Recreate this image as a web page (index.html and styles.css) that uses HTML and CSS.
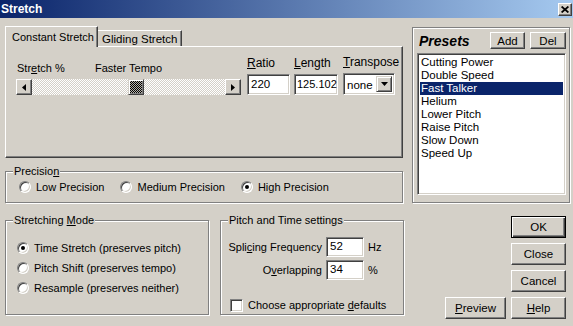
FILE: index.html
```html
<!DOCTYPE html>
<html lang="en">
  <head>
    <meta charset="UTF-8" />
    <title>Stretch</title>
    <link rel="stylesheet" href="styles.css">
  </head>
  <body>
  <div class="window">
    <div class="titlebar">
      <span class="title">Stretch</span>
      <span class="caption-btn">
        <svg width="8" height="7" viewBox="0 0 8 7"><path d="M0.6 0.5L7.4 6.5M7.4 0.5L0.6 6.5" stroke="#000" stroke-width="1.7"/></svg>
      </span>
    </div>

    <div class="client">
      <!-- left top: tabs + precision -->
      <div class="left-top">
        <div class="tabs">
          <div class="tab active">Constant Stretch</div>
          <div class="tab">Gliding Stretch</div>
        </div>
        <div class="tab-panel">
          <div class="stretch-row">
            <div class="slider-block">
              <div class="slider-labels">
                <span class="lbl-stretch">Str<u>e</u>tch %</span>
                <span>Faster Tempo</span>
              </div>
              <div class="slider">
                <span class="arrow-btn">
                  <svg width="4" height="7" viewBox="0 0 4 7"><path d="M4 0L0 3.5L4 7Z" fill="#000"/></svg>
                </span>
                <span class="track"><span class="thumb"></span></span>
                <span class="arrow-btn">
                  <svg width="4" height="7" viewBox="0 0 4 7"><path d="M0 0L4 3.5L0 7Z" fill="#000"/></svg>
                </span>
              </div>
            </div>
            <div class="field field-ratio">
              <span class="field-label"><u>R</u>atio</span>
              <div class="input">220</div>
            </div>
            <div class="field field-length">
              <span class="field-label"><u>L</u>ength</span>
              <div class="input">125.102</div>
            </div>
            <div class="field field-transpose">
              <span class="field-label"><u>T</u>ranspose</span>
              <div class="select">
                <span class="select-value">none</span>
                <span class="drop-btn">
                  <svg width="7" height="4" viewBox="0 0 7 4"><path d="M0 0H7L3.5 4Z" fill="#000"/></svg>
                </span>
              </div>
            </div>
          </div>
        </div>

        <div class="group precision">
          <span class="group-title">Precisio<u>n</u></span>
          <label class="opt"><span class="radio"></span><span>Low Precision</span></label>
          <label class="opt"><span class="radio"></span><span>Medium Precision</span></label>
          <label class="opt"><span class="radio checked"></span><span>High Precision</span></label>
        </div>
      </div>

      <!-- right top: presets -->
      <div class="presets">
        <div class="presets-head">
          <span class="presets-title">Presets</span>
          <span class="btn btn-add">Add</span>
          <span class="btn btn-del">Del</span>
        </div>
        <ul class="listbox">
          <li>Cutting Power</li>
          <li>Double Speed</li>
          <li class="selected">Fast Talker</li>
          <li>Helium</li>
          <li>Lower Pitch</li>
          <li>Raise Pitch</li>
          <li>Slow Down</li>
          <li>Speed Up</li>
        </ul>
      </div>

      <!-- left bottom -->
      <div class="left-bottom">
        <div class="group mode">
          <span class="group-title">Stretching <u>M</u>ode</span>
          <label class="opt"><span class="radio checked"></span><span>Time Stretch (preserves pitch)</span></label>
          <label class="opt"><span class="radio"></span><span>Pitch Shift (preserves tempo)</span></label>
          <label class="opt"><span class="radio"></span><span>Resample (preserves neither)</span></label>
        </div>
        <div class="group pitch">
          <span class="group-title">Pitch and Time settings</span>
          <div class="pitch-grid">
            <span class="pl">Spli<u>c</u>ing Frequency</span>
            <div class="input">52</div>
            <span>Hz</span>
            <span class="pl">O<u>v</u>erlapping</span>
            <div class="input">34</div>
            <span>%</span>
          </div>
          <label class="check-row"><span class="checkbox"></span><span>Choose appropriate <u>d</u>efaults</span></label>
        </div>
      </div>

      <!-- right bottom: buttons -->
      <div class="actions">
        <span class="btn btn-default">OK</span>
        <span class="btn">Close</span>
        <span class="btn">Cancel</span>
        <span class="btn btn-preview"><span><u>P</u>review</span></span>
        <span class="btn"><span><u>H</u>elp</span></span>
      </div>
    </div>
  </div>
  </body>
</html>
```

FILE: styles.css
```css
* {
  box-sizing: border-box;
}
body {
  margin: 0;
  font: 11px "Liberation Sans", Arial, sans-serif;
  color: #000;
}
u {
  text-decoration-thickness: 1px;
  text-underline-offset: 1px;
}
.window {
  width: 573px;
  height: 326px;
  background: #d4d0c8;
  overflow: hidden;
}

/* title bar */
.titlebar {
  height: 18px;
  display: flex;
  align-items: center;
  justify-content: space-between;
  background: linear-gradient(to right, #0a246a, #a6caf0);
}
.title {
  color: #fff;
  font-weight: bold;
  font-size: 12px;
  padding-left: 1px;
}
.caption-btn {
  width: 14px;
  height: 13px;
  margin-right: 1px;
  display: flex;
  align-items: center;
  justify-content: center;
  background: #d4d0c8;
  border: 1px solid;
  border-color: #fff #404040 #404040 #fff;
  box-shadow: inset -1px -1px #808080;
}

/* layout */
.client {
  display: grid;
  grid-template-columns: 399px 158px;
  column-gap: 8px;
  padding: 8px 0 0 5px;
}

/* tabs */
.tabs {
  display: flex;
  align-items: flex-end;
  height: 21px;
  margin-bottom: -1px;
}
.tab {
  position: relative;
  height: 16px;
  margin-bottom: 1px;
  padding: 2px 4px 0 4px;
  background: #d4d0c8;
  border-top: 1px solid #fff;
  border-right: 1px solid #404040;
  box-shadow: inset -1px 0 #808080;
  font-size: 11.5px;
  white-space: nowrap;
}
.tab.active {
  z-index: 1;
  width: 93px;
  height: 21px;
  margin-bottom: 0;
  padding: 4px 0 0 6px;
  border-left: 1px solid #fff;
  font-size: 11px;
}
.tab-panel {
  width: 398px;
  height: 112px;
  padding: 9px 0 0 10px;
  border: 1px solid;
  border-color: #fff #404040 #404040 #fff;
  box-shadow: inset -1px -1px #808080;
}
.stretch-row {
  display: flex;
  align-items: flex-end;
}
.slider-block {
  width: 225px;
}
.slider-labels {
  display: flex;
  line-height: 13px;
  margin-bottom: 4px;
}
.lbl-stretch {
  width: 79px;
  padding-left: 1px;
}
.slider {
  display: flex;
  height: 16px;
}
.arrow-btn {
  width: 16px;
  height: 16px;
  display: flex;
  align-items: center;
  justify-content: center;
  background: #d4d0c8;
  border: 1px solid;
  border-color: #fff #404040 #404040 #fff;
  box-shadow: inset -1px -1px #808080;
}
.track {
  flex: 1;
  display: flex;
  padding-left: 96px;
  background-image: conic-gradient(#fff 25%, #d4d0c8 0 50%, #fff 0 75%, #d4d0c8 0);
  background-size: 2px 2px;
}
.thumb {
  width: 16px;
  height: 16px;
  border: 1px solid;
  border-color: #d4d0c8 #404040 #404040 #d4d0c8;
  box-shadow: inset 1px 1px #fff, inset -1px -1px #808080;
  background-image: conic-gradient(#000 25%, #b8b4ac 0 50%, #000 0 75%, #b8b4ac 0);
  background-size: 2px 2px;
}
.field {
  display: flex;
  flex-direction: column;
}
.field-label {
  line-height: 13px;
  margin-bottom: 4px;
  font-size: 12px;
}
.field-ratio {
  margin-left: 6px;
  width: 43px;
}
.field-length {
  margin-left: 4px;
  width: 44px;
}
.field-transpose {
  margin-left: 5px;
  width: 52px;
}
.input {
  height: 21px;
  padding: 3px 0 0 3px;
  background: #fff;
  border: 1px solid;
  border-color: #808080 #fff #fff #808080;
  box-shadow: inset 1px 1px #404040, inset -1px -1px #d4d0c8;
  font-size: 11.5px;
  white-space: nowrap;
  overflow: hidden;
}
.field-length .input {
  padding-left: 2px;
  font-size: 11px;
}
.select {
  height: 22px;
  display: flex;
  padding: 2px;
  background: #fff;
  border: 1px solid;
  border-color: #808080 #fff #fff #808080;
  box-shadow: inset 1px 1px #404040, inset -1px -1px #d4d0c8;
  font-size: 11.5px;
}
.select-value {
  flex: 1;
  padding: 3px 0 0 1px;
}
.drop-btn {
  width: 16px;
  display: flex;
  align-items: center;
  justify-content: center;
  background: #d4d0c8;
  border: 1px solid;
  border-color: #d4d0c8 #404040 #404040 #d4d0c8;
  box-shadow: inset 1px 1px #fff, inset -1px -1px #808080;
}

/* group boxes */
.group {
  position: relative;
  border: 1px solid #808080;
  box-shadow: inset 1px 1px #fff, 1px 1px #fff;
}
.group-title {
  position: absolute;
  top: -7px;
  left: 7px;
  padding: 0 1px;
  line-height: 13px;
  background: #d4d0c8;
}
.precision {
  width: 398px;
  height: 32px;
  margin-top: 13px;
  display: flex;
  align-items: center;
  gap: 16px;
  padding-left: 13px;
}
.opt {
  display: flex;
  align-items: center;
  gap: 5px;
  line-height: 13px;
}
.radio {
  position: relative;
  width: 12px;
  height: 12px;
  border-radius: 50%;
  background: #fff;
  border: 1px solid;
  border-color: #808080 #fff #fff #808080;
  box-shadow: inset 1px 1px #404040, inset -1px -1px #d4d0c8;
}
.radio.checked::after {
  content: "";
  position: absolute;
  left: 3px;
  top: 3px;
  width: 4px;
  height: 4px;
  border-radius: 50%;
  background: #000;
}
.checkbox {
  width: 13px;
  height: 13px;
  background: #fff;
  border: 1px solid;
  border-color: #808080 #fff #fff #808080;
  box-shadow: inset 1px 1px #404040, inset -1px -1px #d4d0c8;
}

.left-bottom {
  display: flex;
  gap: 11px;
  margin-top: 17px;
}
.mode {
  width: 204px;
  height: 95px;
  display: flex;
  flex-direction: column;
  padding: 17px 0 0 11px;
}
.mode .opt {
  height: 20px;
}
.pitch {
  width: 184px;
  height: 95px;
  padding-top: 16px;
}
.pitch-grid {
  display: grid;
  grid-template-columns: 101px 38px auto;
  column-gap: 4px;
  row-gap: 3px;
  align-items: center;
}
.pitch-grid .input {
  height: 20px;
  padding-top: 2px;
}
.pl {
  text-align: right;
}
.check-row {
  display: flex;
  align-items: center;
  gap: 5px;
  margin: 19px 0 0 9px;
  line-height: 13px;
}

/* presets */
.presets {
  width: 158px;
  height: 176px;
  margin-top: 1px;
  padding: 4px 3px 0 5px;
  border: 1px solid #808080;
  box-shadow: inset 1px 1px #fff, 1px 1px #fff;
}
.presets-head {
  display: flex;
  align-items: center;
  height: 17px;
}
.presets-title {
  flex: 1;
  font-size: 14px;
  font-weight: bold;
  font-style: italic;
  padding-left: 1px;
}
.btn {
  display: flex;
  align-items: center;
  justify-content: center;
  background: #d4d0c8;
  border: 1px solid;
  border-color: #fff #404040 #404040 #fff;
  box-shadow: inset -1px -1px #808080;
  font-size: 11.5px;
}
.btn-add {
  width: 35px;
  height: 17px;
}
.btn-del {
  width: 36px;
  height: 17px;
  margin-left: 5px;
}
.listbox {
  list-style: none;
  margin: 4px 0 0 -1px;
  padding: 2px;
  height: 142px;
  background: #fff;
  border: 1px solid;
  border-color: #808080 #fff #fff #808080;
  box-shadow: inset 1px 1px #404040, inset -1px -1px #d4d0c8;
  font-size: 11.5px;
}
.listbox li {
  height: 13px;
  line-height: 13px;
  padding-left: 1px;
}
.listbox li.selected {
  background: #0a246a;
  color: #fff;
}

/* dialog buttons */
.actions {
  display: grid;
  grid-template-columns: 61px 55px;
  grid-template-rows: repeat(4, 22px);
  justify-content: end;
  column-gap: 5px;
  row-gap: 5px;
  margin-top: 13px;
  padding-right: 4px;
}
.actions .btn {
  grid-column: 2;
}
.actions .btn-preview {
  grid-column: 1;
  grid-row: 4;
}
.btn-default {
  border: 1px solid #000;
  box-shadow: inset 1px 1px #fff, inset -1px -1px #404040, inset -2px -2px #808080;
}
```
